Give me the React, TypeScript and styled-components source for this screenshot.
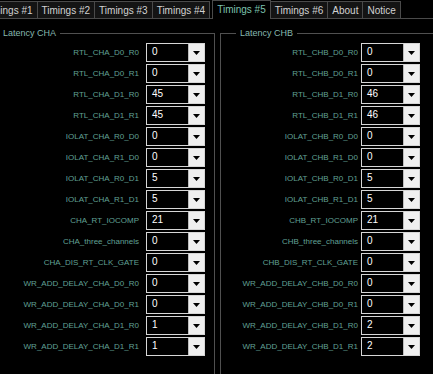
import React from 'react';
import styled, { createGlobalStyle } from 'styled-components';

const GlobalStyle = createGlobalStyle`
  html, body {
    margin: 0;
    padding: 0;
    background: #000;
    overflow: hidden;
  }
`;

const Window = styled.div`
  width: 433px;
  height: 374px;
  overflow: hidden;
  background: #000;
  font-family: 'Liberation Sans', Arial, sans-serif;
`;

// the form is scrolled a little to the right, so its left edge is cut off
const Shifted = styled.div`
  margin-left: -21px;
  width: 480px;
`;

const TabStrip = styled.div`
  display: flex;
  align-items: flex-end;
  height: 18px;
  border-bottom: 1px solid #4a4a4a;
`;

const Tab = styled.div<{ $active?: boolean }>`
  box-sizing: border-box;
  height: ${(p) => (p.$active ? '19px' : '17px')};
  margin-bottom: ${(p) => (p.$active ? '-1px' : '0')};
  margin-left: ${(p) => (p.$active ? '2px' : '0')};
  padding: 3px 4px 0;
  border: 1px solid #4a4a4a;
  border-left: ${(p) => (p.$active ? '1px solid #4a4a4a' : 'none')};
  border-bottom: none;
  background: ${(p) => (p.$active ? '#000' : '#141414')};
  color: ${(p) => (p.$active ? '#7cc2ae' : '#d2d2d2')};
  font-size: 10px;
  line-height: 12px;
  white-space: nowrap;

  &:first-child {
    border-left: 1px solid #4a4a4a;
  }
`;

const Body = styled.div`
  display: flex;
  gap: 5px;
  margin-top: 8px;
  padding-left: 4px;
`;

const Group = styled.fieldset<{ $padRight: number }>`
  box-sizing: border-box;
  width: 232px;
  height: 360px;
  margin: 0;
  padding: 4px ${(p) => p.$padRight}px 0 0;
  border: 1px solid #505050;
  min-width: 0;
`;

const Legend = styled.legend`
  margin-left: 15px;
  padding: 0 4px;
  color: #86b8ae;
  font-size: 9px;
  line-height: 12px;
`;

const Rows = styled.div`
  display: flex;
  flex-direction: column;
  gap: 2px;
`;

const Row = styled.div<{ $gap: number }>`
  display: flex;
  align-items: center;
  justify-content: flex-end;
  gap: ${(p) => p.$gap}px;
  height: 19px;
`;

const Label = styled.span`
  color: #60a195;
  font-size: 8px;
  white-space: nowrap;
`;

const Combo = styled.div`
  box-sizing: border-box;
  display: flex;
  width: 59px;
  height: 19px;
  border: 1px solid #d6d6d6;
  background: #000;
`;

const Value = styled.span`
  flex: 1;
  padding: 0 0 0 5px;
  color: #fff;
  font-size: 10px;
  line-height: 15px;
`;

const DropButton = styled.span`
  display: flex;
  align-items: center;
  justify-content: center;
  width: 15px;
  border-left: 1px solid #bdbdbd;
  background: #efefef;
`;

const Arrow = () => (
  <svg width="7" height="4" viewBox="0 0 7 4">
    <path d="M0 0 H7 L3.5 4 Z" fill="#000" />
  </svg>
);

type Field = [string, string];

const chaFields: Field[] = [
  ['RTL_CHA_D0_R0', '0'],
  ['RTL_CHA_D0_R1', '0'],
  ['RTL_CHA_D1_R0', '45'],
  ['RTL_CHA_D1_R1', '45'],
  ['IOLAT_CHA_R0_D0', '0'],
  ['IOLAT_CHA_R1_D0', '0'],
  ['IOLAT_CHA_R0_D1', '5'],
  ['IOLAT_CHA_R1_D1', '5'],
  ['CHA_RT_IOCOMP', '21'],
  ['CHA_three_channels', '0'],
  ['CHA_DIS_RT_CLK_GATE', '0'],
  ['WR_ADD_DELAY_CHA_D0_R0', '0'],
  ['WR_ADD_DELAY_CHA_D0_R1', '0'],
  ['WR_ADD_DELAY_CHA_D1_R0', '1'],
  ['WR_ADD_DELAY_CHA_D1_R1', '1'],
];

const chbFields: Field[] = [
  ['RTL_CHB_D0_R0', '0'],
  ['RTL_CHB_D0_R1', '0'],
  ['RTL_CHB_D1_R0', '46'],
  ['RTL_CHB_D1_R1', '46'],
  ['IOLAT_CHB_R0_D0', '0'],
  ['IOLAT_CHB_R1_D0', '0'],
  ['IOLAT_CHB_R0_D1', '5'],
  ['IOLAT_CHB_R1_D1', '5'],
  ['CHB_RT_IOCOMP', '21'],
  ['CHB_three_channels', '0'],
  ['CHB_DIS_RT_CLK_GATE', '0'],
  ['WR_ADD_DELAY_CHB_D0_R0', '0'],
  ['WR_ADD_DELAY_CHB_D0_R1', '0'],
  ['WR_ADD_DELAY_CHB_D1_R0', '2'],
  ['WR_ADD_DELAY_CHB_D1_R1', '2'],
];

const tabs = ['Timings #1', 'Timings #2', 'Timings #3', 'Timings #4', 'Timings #5', 'Timings #6', 'About', 'Notice'];

const LatencyGroup = ({ title, fields, padRight, gap }: { title: string; fields: Field[]; padRight: number; gap: number }) => (
  <Group $padRight={padRight}>
    <Legend>{title}</Legend>
    <Rows>
      {fields.map(([name, value]) => (
        <Row key={name} $gap={gap}>
          <Label>{name}</Label>
          <Combo>
            <Value>{value}</Value>
            <DropButton>
              <Arrow />
            </DropButton>
          </Combo>
        </Row>
      ))}
    </Rows>
  </Group>
);

export default function App() {
  return (
    <Window>
      <GlobalStyle />
      <Shifted>
        <TabStrip>
          {tabs.map((t) => (
            <Tab key={t} $active={t === 'Timings #5'}>
              {t}
            </Tab>
          ))}
        </TabStrip>
        <Body>
          <LatencyGroup title="Latency CHA" fields={chaFields} padRight={9} gap={7} />
          <LatencyGroup title="Latency CHB" fields={chbFields} padRight={31} gap={3} />
        </Body>
      </Shifted>
    </Window>
  );
}
